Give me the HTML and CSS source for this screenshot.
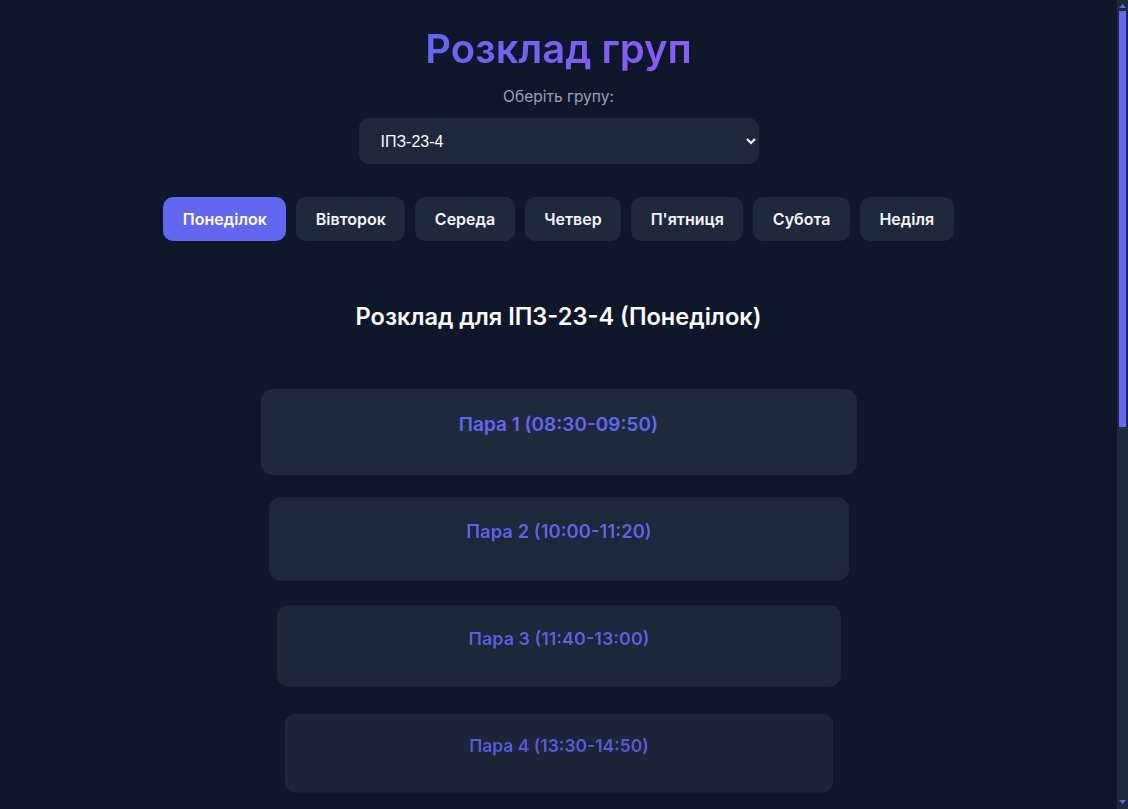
FILE: index.html
```html
<!DOCTYPE html>
<html lang="uk">
<head>
<meta charset="utf-8">
<title>Розклад груп</title>
<link rel="stylesheet" href="styles.css">
</head>
<body>
<div class="viewport">
<div class="page">
  <h1 class="title">Розклад груп</h1>
  <label class="group-label" for="group">Оберіть групу:</label>
  <select id="group" class="group-select">
    <option>ІПЗ-23-4</option>
  </select>
  <div class="days">
    <button class="day active">Понеділок</button>
    <button class="day">Вівторок</button>
    <button class="day">Середа</button>
    <button class="day">Четвер</button>
    <button class="day">П'ятниця</button>
    <button class="day">Субота</button>
    <button class="day">Неділя</button>
  </div>
  <h2 class="schedule-title">Розклад для ІПЗ-23-4 (Понеділок)</h2>
  <div class="lessons">
    <div class="lesson lesson-1"><h3 class="lesson-name">Пара 1 (08:30-09:50)</h3></div>
    <div class="lesson lesson-2"><h3 class="lesson-name">Пара 2 (10:00-11:20)</h3></div>
    <div class="lesson lesson-3"><h3 class="lesson-name">Пара 3 (11:40-13:00)</h3></div>
    <div class="lesson lesson-4"><h3 class="lesson-name">Пара 4 (13:30-14:50)</h3></div>
    <div class="lesson lesson-5"><h3 class="lesson-name">Пара 5 (15:00-16:20)</h3></div>
    <div class="lesson lesson-6"><h3 class="lesson-name">Пара 6 (16:30-17:50)</h3></div>
    <div class="lesson lesson-7"><h3 class="lesson-name">Пара 7 (18:00-19:20)</h3></div>
    <div class="lesson lesson-8"><h3 class="lesson-name">Пара 8 (19:30-20:50)</h3></div>
  </div>
</div>
</div>
<div class="scrollbar" aria-hidden="true">
  <svg class="sb-arrow sb-up" width="7" height="4" viewBox="0 0 7 4"><path d="M3.5 0 L7 4 L0 4 Z" fill="#6366f1"/></svg>
  <div class="sb-thumb"></div>
  <svg class="sb-arrow sb-down" width="7" height="4" viewBox="0 0 7 4"><path d="M0 0 L7 0 L3.5 4 Z" fill="#6366f1"/></svg>
</div>
</body>
</html>
```
FILE: styles.css
```css
html, body {
  height: 100%;
  overflow: hidden;
}
body {
  margin: 0;
  display: flex;
  background: #0f172a;
  color: #f1f5f9;
  font-family: Inter, "Noto Sans", sans-serif;
}
.viewport {
  flex: 1;
  height: 100%;
  overflow-y: auto;
}
.scrollbar {
  width: 11px;
  flex: none;
  height: 100%;
  background: #1e293b;
  display: flex;
  flex-direction: column;
  align-items: center;
}
.sb-arrow {
  display: block;
  flex: none;
}
.sb-up {
  margin-top: 4px;
}
.sb-thumb {
  width: 7px;
  height: 416px;
  margin-top: 3px;
  background: #6366f1;
}
.sb-down {
  margin-top: auto;
  margin-bottom: 5px;
}
.page {
  display: flex;
  flex-direction: column;
  align-items: center;
  padding: 25px 20px 300px;
}
.title {
  margin: 0;
  font-size: 40px;
  line-height: 48px;
  font-weight: 600;
  background: linear-gradient(90deg, #6366f1, #8b5cf6);
  -webkit-background-clip: text;
  background-clip: text;
  color: transparent;
}
.group-label {
  margin-top: 14px;
  font-size: 15.5px;
  color: #94a3b8;
}
.group-select {
  margin-top: 12px;
  width: 400px;
  height: 46px;
  padding: 0 12px 0 18px;
  background: #1e293b;
  color: #f8fafc;
  border: none;
  border-radius: 10px;
  font-family: "Liberation Sans", Arial, sans-serif;
  font-size: 16px;
  outline: none;
}
.days {
  display: flex;
  gap: 10px;
  margin-top: 33px;
}
.day {
  padding: 12px 19.5px;
  line-height: 20px;
  border: none;
  border-radius: 10px;
  background: #1e293b;
  color: #f1f5f9;
  font-family: Inter, "Noto Sans", sans-serif;
  font-size: 16px;
  font-weight: 600;
}
.day.active {
  background: #6366f1;
  color: #ffffff;
}
.schedule-title {
  margin: 61px 0 0;
  font-size: 23.6px;
  font-weight: 600;
  color: #f8fafc;
}
.lessons {
  display: flex;
  flex-direction: column;
  gap: 21px;
  margin-top: 58px;
}
.lesson {
  box-sizing: border-box;
  width: 596px;
  height: 86px;
  padding: 24px;
  background: #1e293b;
  border-radius: 12px;
  text-align: center;
}
.lesson-name {
  margin: 0;
  font-size: 19px;
  font-weight: 600;
  color: #6366f1;
}
.lesson-2 { transform: scale(0.973); background: #1d283a; }
.lesson-3 { transform: scale(0.946); background: #1c2739; }
.lesson-4 { transform: scale(0.92); background: #1c2638; }
.lesson-5, .lesson-6, .lesson-7, .lesson-8 { transform: scale(0.9); background: #1b2537; }
.lesson-2 .lesson-name { color: #5f62e9; }
.lesson-3 .lesson-name { color: #5b5ee1; }
.lesson-4 .lesson-name { color: #5759d8; }
.lesson-5 .lesson-name, .lesson-6 .lesson-name,
.lesson-7 .lesson-name, .lesson-8 .lesson-name { color: #5356d0; }
```
